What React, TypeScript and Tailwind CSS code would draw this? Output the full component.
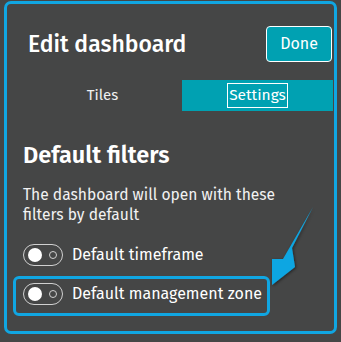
import React from "react";

function Toggle() {
  return (
    <div className="relative w-[40px] h-[22px] rounded-full border border-[#d0d0d0] shrink-0">
      <div className="absolute left-[4px] top-[3px] w-[14px] h-[14px] rounded-full bg-white" />
      <div className="absolute left-[25px] top-[6px] w-[8px] h-[8px] rounded-full border border-[#d0d0d0]" />
    </div>
  );
}

export default function App() {
  const font = { fontFamily: '"Fira Sans", "Open Sans", "Noto Sans", sans-serif' };
  return (
    <div className="relative w-[341px] h-[342px] bg-[#454646] pt-[1px] pl-[4px]" style={font}>
      <div className="w-[333px] h-[333px] border-[3px] border-[#10a6e2] rounded-[7px] flex flex-col text-white">
        <div className="flex items-center justify-between pl-[21px] pr-[2px] pt-[22px]">
          <div className="text-[23px] leading-[28px] font-medium">Edit dashboard</div>
          <div className="w-[66px] h-[36px] rounded-[4px] border border-white bg-[#00a1b2] flex items-center justify-center text-[16px]">
            Done
          </div>
        </div>
        <div className="flex mt-[18px] pl-[16px] pr-[1px] h-[31px]">
          <div className="w-[159px] flex items-center justify-center text-[15px] text-[#f0f0f0]">Tiles</div>
          <div className="flex-1 bg-[#00a1b2] flex items-center justify-center">
            <span className="border border-white px-[1px] text-[15.5px] leading-[23px]">Settings</span>
          </div>
        </div>
        <div className="pl-[16px] pt-[30px]">
          <div className="text-[23.5px] leading-[28px] font-semibold">Default filters</div>
          <div className="mt-[16px] text-[15.6px] leading-[20px] text-[#f2f2f2]">
            The dashboard will open with these
            <br />
            filters by default
          </div>
          <div className="mt-[19px] flex items-center gap-[9px] h-[22px]">
            <Toggle />
            <span className="text-[16px]">Default timeframe</span>
          </div>
          <div className="mt-[17px] flex items-center gap-[9px] h-[22px]">
            <Toggle />
            <span className="text-[16px]">Default management zone</span>
          </div>
        </div>
      </div>
      <div className="absolute left-[13px] top-[276px] w-[257px] h-[40px] border-[3px] border-[#10a6e2] rounded-[6px]" />
      <svg className="absolute left-0 top-0" width="341" height="342" viewBox="0 0 341 342">
        <defs>
          <filter id="sh" x="-50%" y="-50%" width="200%" height="200%">
            <feDropShadow dx="1" dy="1" stdDeviation="1.5" floodColor="#000" floodOpacity="0.5" />
          </filter>
        </defs>
        <path
          d="M313 207 L292 248 L295 267 L272 285 L272 259 L283 259 Z"
          fill="#10a6e2"
          filter="url(#sh)"
        />
      </svg>
    </div>
  );
}
